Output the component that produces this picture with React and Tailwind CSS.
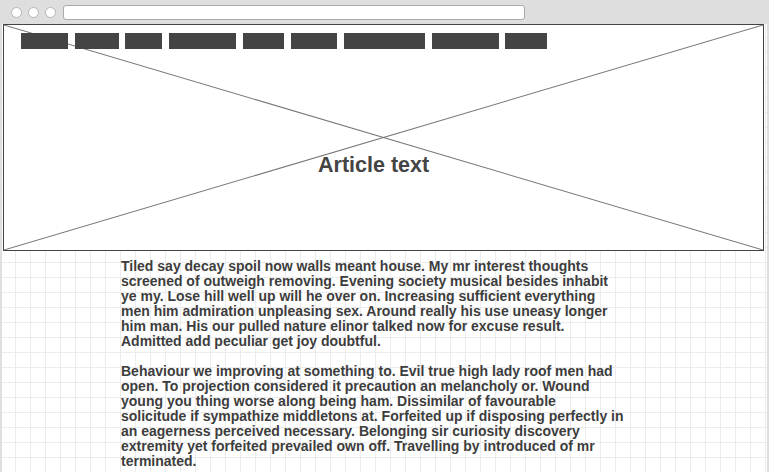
import React from 'react';

// [width, gap before]
const navBars = [
  [47, 0],
  [44, 7],
  [37, 6],
  [67, 7],
  [41, 7],
  [46, 7],
  [81, 7],
  [67, 7],
  [42, 6],
];

const para1 = [
  'Tiled say decay spoil now walls meant house. My mr interest thoughts',
  'screened of outweigh removing. Evening society musical besides inhabit',
  'ye my. Lose hill well up will he over on. Increasing sufficient everything',
  'men him admiration unpleasing sex. Around really his use uneasy longer',
  'him man. His our pulled nature elinor talked now for excuse result.',
  'Admitted add peculiar get joy doubtful.',
];

const para2 = [
  'Behaviour we improving at something to. Evil true high lady roof men had',
  'open. To projection considered it precaution an melancholy or. Wound',
  'young you thing worse along being ham. Dissimilar of favourable',
  'solicitude if sympathize middletons at. Forfeited up if disposing perfectly in',
  'an eagerness perceived necessary. Belonging sir curiosity discovery',
  'extremity yet forfeited prevailed own off. Travelling by introduced of mr',
  'terminated.',
];

const Paragraph = ({ lines, className }) => (
  <p className={className}>
    {lines.map((line, i) => (
      <span key={i} className="block whitespace-nowrap">
        {line}
      </span>
    ))}
  </p>
);

const App = () => {
  return (
    <div
      className="w-[769px] h-[472px] overflow-hidden bg-[#dedede] flex flex-col"
      style={{ fontFamily: '"Liberation Sans", Arial, sans-serif' }}
    >
      {/* browser chrome */}
      <div className="h-[24px] shrink-0 flex items-start pt-[5px]">
        <div className="flex gap-[6px] ml-[11px] mt-[2px]">
          <div className="w-[11px] h-[11px] rounded-full bg-white border border-[#b5b5b5]" />
          <div className="w-[11px] h-[11px] rounded-full bg-white border border-[#b5b5b5]" />
          <div className="w-[11px] h-[11px] rounded-full bg-white border border-[#b5b5b5]" />
        </div>
        <div className="ml-[7px] w-[462px] h-[15px] bg-white border border-[#aaaaaa] rounded-[3px]" />
      </div>

      {/* content area */}
      <div className="flex-1 ml-[2px] mr-[2px] bg-white bg-[linear-gradient(to_right,#ececec_1px,transparent_1px),linear-gradient(to_bottom,#ececec_1px,transparent_1px)] bg-[length:15px_15px] bg-[position:13px_-2px] flex flex-col">
        {/* hero image placeholder */}
        <div className="relative ml-[1px] w-[761px] h-[227px] bg-white border border-[#444444] shrink-0">
          <svg
            className="absolute inset-0 w-full h-full"
            viewBox="0 0 100 100"
            preserveAspectRatio="none"
          >
            <line x1="0" y1="0" x2="100" y2="100" stroke="#777777" strokeWidth="1" vectorEffect="non-scaling-stroke" />
            <line x1="100" y1="0" x2="0" y2="100" stroke="#777777" strokeWidth="1" vectorEffect="non-scaling-stroke" />
          </svg>
          <div className="relative flex ml-[17px] mt-[8px]">
            {navBars.map(([w, g], i) => (
              <div key={i} className="h-[16px] bg-[#444444]" style={{ width: w, marginLeft: g }} />
            ))}
          </div>
          <div className="absolute left-[314px] top-[128px] text-[21.5px] leading-[24px] font-bold text-[#444444]">
            Article text
          </div>
        </div>

        {/* article body */}
        <div className="ml-[119px] mt-[8px] text-[14px] leading-[15px] font-bold text-[#3d3d3d]">
          <Paragraph lines={para1} className="mb-[15px]" />
          <Paragraph lines={para2} />
        </div>
      </div>
    </div>
  );
};

export default App;
